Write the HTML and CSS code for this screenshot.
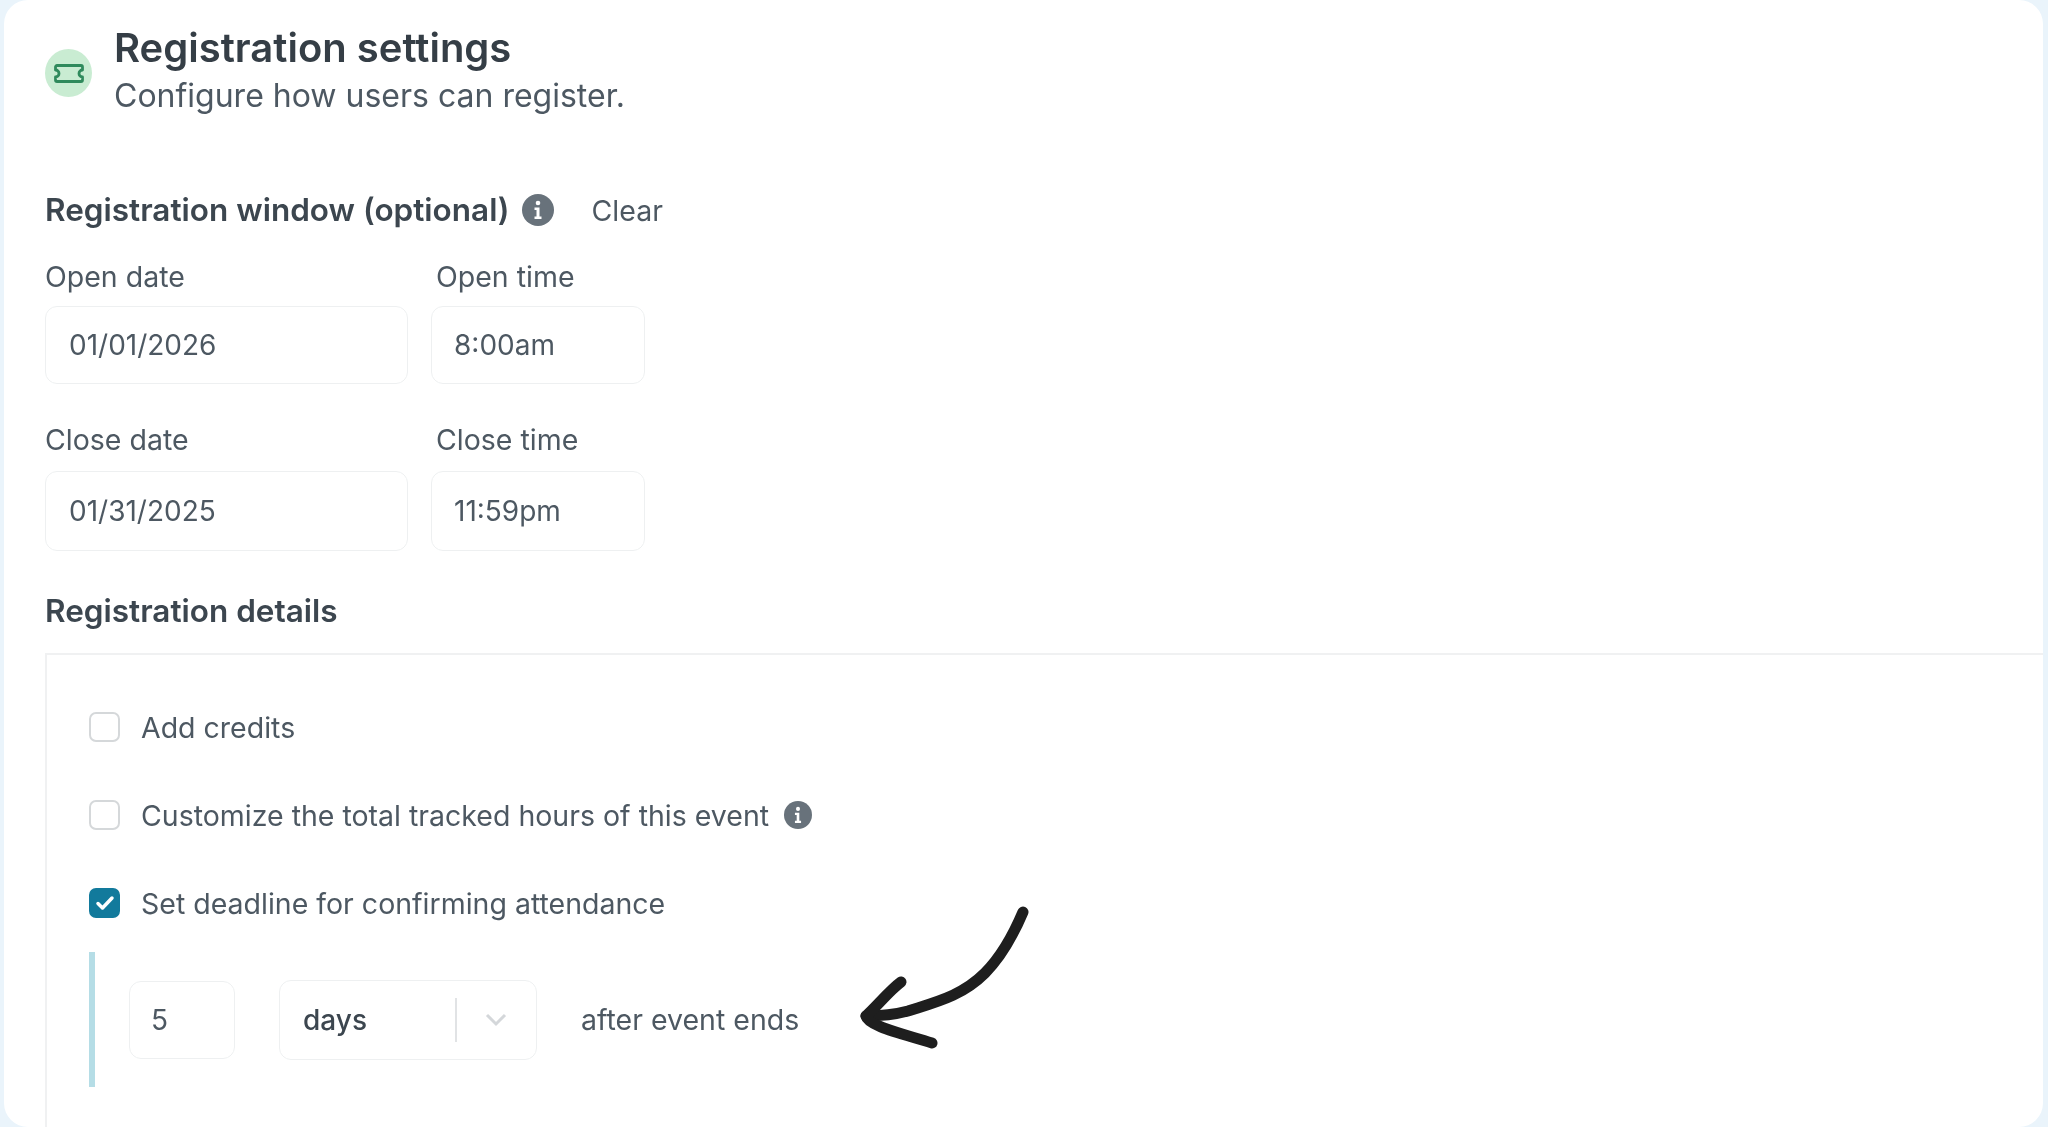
FILE: index.html
```html
<!DOCTYPE html>
<html lang="en">
<head>
    <meta charset="UTF-8">
    <title>Registration settings</title>
    <link rel="stylesheet" href="styles.css">
</head>
<body>
    <div class="card">
        <!-- Header -->
        <div class="header">
            <div class="header-icon">
                <svg width="30" height="19" viewBox="0 0 30 19" fill="none" stroke="#2f8a5c" stroke-width="2.8" stroke-linejoin="round">
                    <path d="M3 1.5h24a1.5 1.5 0 0 1 1.5 1.5v3a3.5 3.5 0 0 0 0 7v3a1.5 1.5 0 0 1-1.5 1.5H3A1.5 1.5 0 0 1 1.500 16v-3a3.500 3.500 0 0 0 0-7V3A1.500 1.500 0 0 1 3 1.500z"/>
                </svg>
            </div>
            <div>
                <h1>Registration settings</h1>
                <p>Configure how users can register.</p>
            </div>
        </div>

        <!-- Registration window -->
        <div class="section-title window-title">
            <h2>Registration window (optional)</h2>
            <svg class="info" width="32" height="32" viewBox="0 0 32 32">
                <circle cx="16" cy="16" r="16" fill="#68727b"/>
                <circle cx="16" cy="9" r="2.300" fill="#fff"/>
                <path d="M12.500 13.500h5v9h2v2.500h-7v-2.500h2v-6.500h-2z" fill="#fff"/>
            </svg>
            <span class="clear">Clear</span>
        </div>

        <div class="field-row">
            <div class="field date">
                <label>Open date</label>
                <div class="input">01/01/2026</div>
            </div>
            <div class="field time">
                <label>Open time</label>
                <div class="input">8:00am</div>
            </div>
        </div>

        <div class="field-row close-row">
            <div class="field date">
                <label>Close date</label>
                <div class="input">01/31/2025</div>
            </div>
            <div class="field time">
                <label>Close time</label>
                <div class="input">11:59pm</div>
            </div>
        </div>

        <!-- Registration details -->
        <h2 class="details-title">Registration details</h2>
        <div class="details">
            <div class="check-row">
                <span class="checkbox"></span>
                <span>Add credits</span>
            </div>
            <div class="check-row">
                <span class="checkbox"></span>
                <span>Customize the total tracked hours of this event</span>
                <svg class="info-small" width="28" height="28" viewBox="0 0 32 32">
                    <circle cx="16" cy="16" r="16" fill="#68727b"/>
                    <circle cx="16" cy="9" r="2.300" fill="#fff"/>
                    <path d="M12.500 13.500h5v9h2v2.500h-7v-2.500h2v-6.500h-2z" fill="#fff"/>
                </svg>
            </div>
            <div class="check-row">
                <span class="checkbox checked">
                    <svg width="20" height="16" viewBox="0 0 20 16" fill="none" stroke="#fff" stroke-width="3.500" stroke-linecap="round" stroke-linejoin="round">
                        <path d="M3 8.500l4.500 4.500L17 3"/>
                    </svg>
                </span>
                <span>Set deadline for confirming attendance</span>
            </div>
            <div class="deadline">
                <div class="input number">5</div>
                <div class="input select">
                    <span class="select-value">days</span>
                    <span class="select-sep"></span>
                    <svg width="24" height="14" viewBox="0 0 24 14" fill="none" stroke="#d4d7da" stroke-width="3">
                        <path d="M3 2l9 9 9-9"/>
                    </svg>
                </div>
                <span>after event ends</span>
            </div>
        </div>
    </div>

    <!-- Hand drawn arrow -->
    <svg class="arrow" width="180" height="150" viewBox="850 900 180 150" fill="none" stroke="#1e1e1e" stroke-width="11" stroke-linecap="round" stroke-linejoin="round">
        <path d="M1023 912C1012 938 1001 957 985 973C962 996 936 1002 908 1011C893 1015 880 1016 866 1016"/>
        <path d="M901 982C890 990 877 1006 866 1016C868 1026 900 1033 932 1043"/>
    </svg>
</body>
</html>
```

FILE: styles.css
```css
body {
    font-family: Inter, "Noto Sans", sans-serif;
    margin: 0;
    padding: 0;
    height: 1127px;
    overflow: hidden;
    background-color: #eaf4fb;
    color: #4d5862;
}

h1, h2, p {
    margin: 0;
}

.card {
    height: 1127px;
    box-sizing: border-box;
    margin: 0 5px 0 4px;
    padding: 25px 0 0 41px;
    background-color: #fff;
    border-radius: 24px;
    overflow: hidden;
    filter: blur(0.4px);
}

.header {
    display: flex;
    align-items: center;
    gap: 22px;
}

.header-icon {
    width: 47px;
    height: 48px;
    display: flex;
    align-items: center;
    justify-content: center;
    background-color: #c9ecd2;
    border-radius: 50%;
}

h1 {
    font-size: 40px;
    font-weight: 600;
    line-height: 46px;
    color: #353e46;
}

.header p {
    font-size: 32px;
    line-height: 50px;
}

h2 {
    font-size: 31.5px;
    font-weight: 600;
    line-height: 40px;
    color: #3c464f;
}

.section-title {
    display: flex;
    align-items: center;
}

.window-title {
    margin-top: 69px;
}

.info {
    margin-left: 12px;
}

.clear {
    margin-left: 38px;
    font-size: 28.5px;
}

.field-row {
    display: flex;
    margin-top: 30px;
}

.close-row {
    margin-top: 39px;
}

.field {
    display: flex;
    flex-direction: column;
}

.field label {
    font-size: 28.5px;
    line-height: 34px;
    margin-bottom: 12px;
}

.close-row label {
    margin-bottom: 14px;
}

.date {
    width: 363px;
    margin-right: 23px;
}

.time {
    width: 214px;
}

.time label {
    margin-left: 5px;
}

.input {
    box-sizing: border-box;
    height: 78px;
    display: flex;
    align-items: center;
    padding: 0 23px;
    border: 1.500px solid #eef0f1;
    border-radius: 12px;
    font-size: 28px;
}

.close-row .input {
    height: 80px;
}

.time .input {
    padding: 0 22px;
}

.details-title {
    margin-top: 40px;
    line-height: 40px;
}

.details {
    margin-top: 22px;
    padding: 52px 0 0 42px;
    border-top: 2px solid #f0f1f2;
    border-left: 2px solid #f0f1f2;
    height: 476px;
    box-sizing: border-box;
    font-size: 28.5px;
}

.check-row {
    display: flex;
    align-items: center;
    height: 40px;
    margin-bottom: 48px;
}

.checkbox {
    box-sizing: border-box;
    width: 31px;
    height: 30px;
    margin-right: 21px;
    display: flex;
    align-items: center;
    justify-content: center;
    border: 2px solid #d5d8da;
    border-radius: 7px;
}

.checked {
    background-color: #127a9c;
    border-color: #127a9c;
}

.info-small {
    margin-left: 15px;
}

.deadline {
    display: flex;
    align-items: center;
    height: 135px;
    margin-top: -19px;
    padding-left: 34px;
    border-left: 6px solid #b5dde6;
}

.number {
    width: 106px;
    margin-right: 44px;
    padding: 0 21px;
}

.select {
    width: 258px;
    height: 80px;
    margin-right: 44px;
    color: #3c464f;
    font-weight: 500;
}

.select-value {
    width: 152px;
}

.select-sep {
    width: 2px;
    height: 44px;
    background-color: #e1e3e5;
    margin-right: 27px;
}

.arrow {
    position: absolute;
    left: 850px;
    top: 900px;
}
```
